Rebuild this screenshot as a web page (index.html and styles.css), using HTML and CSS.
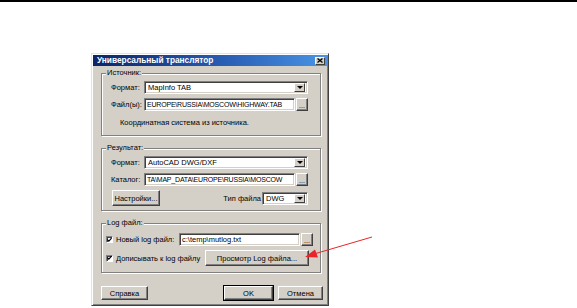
FILE: index.html
```html
<!DOCTYPE html>
<html lang="ru">
<head>
  <meta charset="UTF-8" />
  <title>Универсальный транслятор</title>
  <link rel="stylesheet" href="styles.css">
</head>
<body>

<div class="topline"></div>

<div class="dialog">
  <div class="titlebar">
    <span class="title">Универсальный транслятор</span>
    <span class="close">
      <svg width="6" height="5" viewBox="0 0 6 5"><path d="M0.5 0.5 L5.5 4.5 M5.5 0.5 L0.5 4.5" stroke="#000" stroke-width="1.3"/></svg>
    </span>
  </div>

  <div class="content">
    <!-- Источник -->
    <div class="group g-src">
      <span class="legend">Источник:</span>
      <div class="row">
        <span class="lbl">Формат:</span>
        <div class="combo wide"><span class="val">MapInfo TAB</span><span class="drop"><i></i></span></div>
      </div>
      <div class="row">
        <span class="lbl">Файл(ы):</span>
        <div class="field path">EUROPE\RUSSIA\MOSCOW\HIGHWAY.TAB</div>
        <div class="btn dots">...</div>
      </div>
      <div class="note">Координатная система из источника.</div>
    </div>

    <!-- Результат -->
    <div class="group g-dst">
      <span class="legend">Результат:</span>
      <div class="row">
        <span class="lbl">Формат:</span>
        <div class="combo wide"><span class="val">AutoCAD DWG/DXF</span><span class="drop"><i></i></span></div>
      </div>
      <div class="row">
        <span class="lbl">Каталог:</span>
        <div class="field path">TA\MAP_DATA\EUROPE\RUSSIA\MOSCOW</div>
        <div class="btn dots">...</div>
      </div>
      <div class="row opts">
        <div class="btn settings">Настройки...</div>
        <span class="type-lbl">Тип файла</span>
        <div class="combo small"><span class="val">DWG</span><span class="drop"><i></i></span></div>
      </div>
    </div>

    <!-- Log файл -->
    <div class="group g-log">
      <span class="legend">Log файл:</span>
      <div class="row">
        <span class="check"><svg width="6" height="6" viewBox="0 0 6 6"><path d="M0.5 2.5 L2.2 4.3 L5.5 0.8" fill="none" stroke="#000" stroke-width="1.4"/></svg></span>
        <span class="chk-lbl first">Новый log файл:</span>
        <div class="field logpath">c:\temp\mutlog.txt</div>
        <div class="btn dots">...</div>
      </div>
      <div class="row row2">
        <span class="check"><svg width="6" height="6" viewBox="0 0 6 6"><path d="M0.5 2.5 L2.2 4.3 L5.5 0.8" fill="none" stroke="#000" stroke-width="1.4"/></svg></span>
        <span class="chk-lbl">Дописывать к log файлу</span>
        <div class="btn view">Просмотр Log файла...</div>
      </div>
    </div>

    <div class="buttons">
      <div class="btn help">Справка</div>
      <div class="btn ok">OK</div>
      <div class="btn cancel">Отмена</div>
    </div>
  </div>
</div>

<svg class="arrow" width="577" height="308" viewBox="0 0 577 308">
  <line x1="372" y1="237" x2="314" y2="254" stroke="#e8262a" stroke-width="1"/>
  <polygon points="305,257 315,249.5 318,257.5" fill="#e8262a"/>
</svg>

</body>
</html>
```

FILE: styles.css
```css
* {
  box-sizing: border-box;
}
body {
  margin: 0;
  width: 577px;
  height: 308px;
  overflow: hidden;
  position: relative;
  background: #fff;
  font-family: "Liberation Sans", Arial, sans-serif;
  font-size: 7.5px;
  color: #000;
}

.topline {
  height: 2px;
  background: #000;
}

.dialog {
  margin: 51px 0 0 91px;
  width: 238px;
  height: 253px;
  background: #d4d0c8;
  border: 1px solid;
  border-color: #e6e3dc #404040 #404040 #e6e3dc;
  box-shadow: inset 1px 1px #fff, inset -1px -1px #808080;
  padding: 1px;
  display: flex;
  flex-direction: column;
}

.titlebar {
  height: 11px;
  background: linear-gradient(to right, #0a246a, #2b62b8 60%, #4a94e4);
  display: flex;
  align-items: center;
  justify-content: space-between;
  padding: 0 2px 0 4px;
}
.title {
  color: #fff;
  font-weight: bold;
  font-size: 8.3px;
  line-height: 11px;
}
.close {
  width: 10px;
  height: 8px;
  background: #d4d0c8;
  border: 1px solid;
  border-color: #fff #404040 #404040 #fff;
  display: flex;
  align-items: center;
  justify-content: center;
}
.close svg {
  display: block;
}

.content {
  flex: 1;
  padding: 0 6px 0 8px;
  display: flex;
  flex-direction: column;
}

/* group boxes */
.group {
  position: relative;
  border: 1px solid #808080;
  box-shadow: inset 1px 1px #fff, 1px 1px #fff;
  padding: 7px 12px 0 9px;
}
.legend {
  position: absolute;
  top: -6px;
  left: 4px;
  padding: 0 1px;
  background: #d4d0c8;
  line-height: 10px;
}
.g-src {
  margin-top: 7px;
  height: 63px;
}
.g-dst {
  margin-top: 12px;
  height: 63px;
}
.g-log {
  margin-top: 12px;
  height: 50px;
  padding-left: 4px;
  padding-top: 9px;
}

.row {
  display: flex;
  align-items: center;
  height: 13px;
  margin-bottom: 4px;
}
.lbl {
  width: 33px;
  flex: none;
  white-space: nowrap;
}
.note {
  margin-top: 7px;
  padding-left: 9px;
  line-height: 10px;
}

/* sunken controls */
.field, .combo {
  height: 13px;
  flex: none;
  background: #fff;
  border: 1px solid;
  border-color: #808080 #fff #fff #808080;
  box-shadow: inset 1px 1px #404040, inset -1px -1px #d4d0c8;
  padding: 0 1px 0 2px;
  line-height: 11px;
  white-space: nowrap;
  overflow: hidden;
}
.path {
  width: 151px;
  font-size: 7px;
  letter-spacing: -0.2px;
}
.logpath {
  width: 121px;
  margin-left: 2px;
}
.combo {
  display: flex;
  align-items: center;
  justify-content: space-between;
  padding: 2px 2px 2px 3px;
}
.combo.wide {
  width: 164px;
}
.combo.small {
  width: 46px;
  margin-left: 1px;
}
.drop {
  width: 11px;
  height: 9px;
  background: #d4d0c8;
  border: 1px solid;
  border-color: #fff #404040 #404040 #fff;
  display: flex;
  align-items: center;
  justify-content: center;
}
.drop i {
  width: 0;
  height: 0;
  border-left: 3px solid transparent;
  border-right: 3px solid transparent;
  border-top: 3px solid #000;
}

/* raised buttons */
.btn {
  flex: none;
  background: #d4d0c8;
  border: 1px solid;
  border-color: #fff #404040 #404040 #fff;
  box-shadow: inset -1px -1px #808080;
  display: flex;
  align-items: center;
  justify-content: center;
  white-space: nowrap;
}
.dots {
  width: 12px;
  height: 13px;
  margin-left: 1px;
  align-items: flex-end;
  line-height: 9px;
  font-size: 7px;
}
.opts {
  height: 16px;
  margin-top: 1px;
}
.settings {
  width: 48px;
  height: 16px;
  margin-left: 1px;
}
.type-lbl {
  margin-left: auto;
  white-space: nowrap;
}

.check {
  width: 7px;
  height: 7px;
  flex: none;
  background: #fff;
  border: 1px solid;
  border-color: #808080 #fff #fff #808080;
  box-shadow: inset 1px 1px #404040;
  display: flex;
  align-items: center;
  justify-content: center;
  margin-right: 3px;
}
.check svg {
  display: block;
}
.chk-lbl {
  white-space: nowrap;
}
.chk-lbl.first {
  width: 61px;
  flex: none;
}
.row2 {
  height: 16px;
  margin-top: 4px;
}
.view {
  margin-left: auto;
  margin-right: -1px;
  width: 104px;
  height: 16px;
}

.buttons {
  display: flex;
  align-items: center;
  margin-top: 13px;
  margin-right: -2px;
}
.buttons .btn {
  height: 14px;
}
.help {
  width: 47px;
}
.ok {
  width: 49px;
  margin-left: auto;
  outline: 1px solid #000;
}
.cancel {
  width: 45px;
  margin-left: 5px;
}

.arrow {
  position: absolute;
  left: 0;
  top: 0;
  pointer-events: none;
}
```
